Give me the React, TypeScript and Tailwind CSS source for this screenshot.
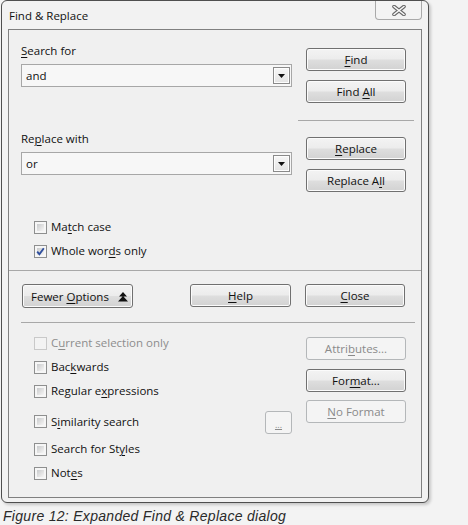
import React from "react";

const U = ({ c }: { c: string }) => (
  <span className="underline decoration-1 underline-offset-[2px]">{c}</span>
);

function Btn({
  children,
  w,
  disabled,
}: {
  children: React.ReactNode;
  w: string;
  disabled?: boolean;
}) {
  if (disabled) {
    return (
      <div
        className={
          "h-[23px] shrink-0 flex items-center justify-center rounded-[3px] border border-[#b4b7b9] bg-[#f4f4f4] text-[#8a8a8a] " +
          w
        }
      >
        <span className="whitespace-pre">{children}</span>
      </div>
    );
  }
  return (
    <div
      className={
        "h-[23px] shrink-0 flex items-center justify-center rounded-[3px] border border-[#707070] bg-[linear-gradient(to_bottom,#f3f3f3_0%,#ececec_48%,#dedede_52%,#d2d2d2_100%)] shadow-[inset_0_0_0_1px_#fbfbfb] text-[#111] " +
        w
      }
    >
      <span className="whitespace-pre">{children}</span>
    </div>
  );
}

function Check({ checked, disabled }: { checked?: boolean; disabled?: boolean }) {
  if (disabled) {
    return <div className="w-[13px] h-[13px] shrink-0 border border-[#c9c9c9] bg-[#f3f3f3]" />;
  }
  return (
    <div className="relative w-[13px] h-[13px] shrink-0 border border-[#8e8f8f] bg-[#f6f6f6] p-[2px]">
      <div className="w-full h-full bg-[linear-gradient(135deg,#c9cbcd_0%,#e4e4e4_60%,#f6f6f6_100%)]" />
      {checked && (
        <svg className="absolute left-[-1px] top-[-1px]" width="13" height="13" viewBox="0 0 13 13">
          <path d="M3.2 6.6 L5.4 9.3 L9.8 3.2" fill="none" stroke="#2f4f9e" strokeWidth="1.9" />
        </svg>
      )}
    </div>
  );
}

function Row({
  children,
  checked,
  disabled,
  className = "",
}: {
  children: React.ReactNode;
  checked?: boolean;
  disabled?: boolean;
  className?: string;
}) {
  return (
    <div className={"flex items-center h-[16px] pl-[13px] " + className}>
      <Check checked={checked} disabled={disabled} />
      <span className={"ml-[4px] whitespace-pre " + (disabled ? "text-[#8d8d8d]" : "text-[#111]")}>
        {children}
      </span>
    </div>
  );
}

function Combo({ value }: { value: string }) {
  return (
    <div className="mt-[5px] h-[23px] w-[271px] flex items-center border border-[#a7a7a7] bg-[#f7f7f7] pl-[4px] pr-[1px]">
      <span className="flex-1 text-[#111]">{value}</span>
      <div className="w-[17px] h-[17px] border border-[#8a8a8a] bg-[linear-gradient(to_bottom,#f7f7f7,#e3e3e3)] shadow-[inset_0_0_0_1px_#fdfdfd] flex items-center justify-center">
        <svg width="7" height="4" viewBox="0 0 7 4">
          <path d="M0 0 H7 L3.5 4 Z" fill="#111" />
        </svg>
      </div>
    </div>
  );
}

export default function App() {
  return (
    <div className="w-[468px] h-[525px] bg-[#f3f3f3] font-['Open_Sans',sans-serif] text-[11.5px] leading-[16px] text-[#111] overflow-hidden">
      <div className="ml-[1px] w-[428px] h-[503px] border border-[#4f4f4f] rounded-[6px] bg-[#f2f2f2] flex flex-col px-[6px] pb-[4px] shadow-[2px_2px_3px_rgba(0,0,0,0.18)]">
        {/* title bar */}
        <div className="h-[28px] flex justify-between items-start">
          <div className="mt-[7px] pl-[1px] text-[#111]">Find &amp; Replace</div>
          <div className="w-[47px] h-[19px] rounded-b-[4px] border border-t-0 border-[#a9a9a9] bg-[#f3f3f3] flex items-center justify-center">
            <svg width="14" height="11" viewBox="0 0 14 11">
              <path d="M2 1.5 L12 9.5 M12 1.5 L2 9.5" stroke="#666" strokeWidth="3.6" strokeLinecap="round" />
              <path d="M2 1.5 L12 9.5 M12 1.5 L2 9.5" stroke="#fafafa" strokeWidth="1.6" strokeLinecap="round" />
            </svg>
          </div>
        </div>

        {/* panel */}
        <div className="flex-1 border border-[#808080] bg-[#f0f0f0] flex flex-col">
          {/* top section */}
          <div className="flex pl-[12px] pr-[14px]">
            <div className="w-[271px] pt-[13px] flex flex-col">
              <div className="h-[16px]">
                <U c="S" />earch for
              </div>
              <Combo value="and" />
              <div className="h-[16px] mt-[44px]">
                Re<U c="p" />lace with
              </div>
              <Combo value="or" />
              <Row className="mt-[44px]">
                Ma<U c="t" />ch case
              </Row>
              <Row checked className="mt-[8px]">
                Whole wor<U c="d" />s only
              </Row>
            </div>
            <div className="ml-[14px] w-[100px] pt-[18px] flex flex-col">
              <Btn w="w-[100px]">
                <U c="F" />ind
              </Btn>
              <div className="mt-[9px]">
                <Btn w="w-[100px]">
                  Find <U c="A" />ll
                </Btn>
              </div>
              <div className="mt-[17px] -mx-[8px] h-px bg-[#a8a8a8]" />
              <div className="mt-[16px]">
                <Btn w="w-[100px]">
                  <U c="R" />eplace
                </Btn>
              </div>
              <div className="mt-[9px]">
                <Btn w="w-[100px]">
                  Replace A<U c="l" />l
                </Btn>
              </div>
            </div>
          </div>

          <div className="mt-[11px] h-px bg-[#a8a8a8]" />

          {/* middle buttons */}
          <div className="mt-[13px] flex pl-[13px]">
            <div className="h-[24px] w-[111px] shrink-0 flex items-center justify-between pl-[8px] pr-[4px] rounded-[3px] border border-[#707070] bg-[linear-gradient(to_bottom,#f3f3f3_0%,#ececec_48%,#dedede_52%,#d2d2d2_100%)] shadow-[inset_0_0_0_1px_#fbfbfb] text-[#111]">
              <span className="mt-[2px] whitespace-pre">
                Fewer <U c="O" />ptions
              </span>
              <svg width="10" height="10" viewBox="0 0 10 10" className="mt-[2px]">
                <path d="M5 0 L9 4.5 L1 4.5 Z M5 4 L10 9.5 L0 9.5 Z" fill="#111" />
              </svg>
            </div>
            <div className="ml-[57px]">
              <Btn w="w-[101px]">
                <U c="H" />elp
              </Btn>
            </div>
            <div className="ml-[14px]">
              <Btn w="w-[100px]">
                <U c="C" />lose
              </Btn>
            </div>
          </div>

          <div className="mt-[14px] ml-[12px] mr-[6px] h-px bg-[#a8a8a8]" />

          {/* bottom section */}
          <div className="flex pl-[12px] pr-[14px]">
            <div className="w-[271px] flex flex-col">
              <Row disabled className="mt-[12px]">
                C<U c="u" />rrent selection only
              </Row>
              <Row className="mt-[8px]">
                Bac<U c="k" />wards
              </Row>
              <Row className="mt-[8px]">
                Regular e<U c="x" />pressions
              </Row>
              <div className="mt-[12px] h-[23px] flex items-center justify-between">
                <Row className="-mt-[2px]">
                  S<U c="i" />milarity search
                </Row>
                <div className="w-[27px] h-[23px] rounded-[3px] border border-[#b4b7b9] bg-[#f4f4f4] flex items-end justify-center pb-[4px] text-[#8a8a8a] text-[9px] leading-[9px]">
                  <span className="underline decoration-1">...</span>
                </div>
              </div>
              <Row className="mt-[7px]">
                Search for St<U c="y" />les
              </Row>
              <Row className="mt-[8px]">
                Not<U c="e" />s
              </Row>
            </div>
            <div className="ml-[14px] w-[100px] flex flex-col">
              <div className="mt-[14px]">
                <Btn w="w-[100px]" disabled>
                  Attri<U c="b" />utes...
                </Btn>
              </div>
              <div className="mt-[9px]">
                <Btn w="w-[100px]">
                  For<U c="m" />at...
                </Btn>
              </div>
              <div className="mt-[8px]">
                <Btn w="w-[100px]" disabled>
                  <U c="N" />o Format
                </Btn>
              </div>
            </div>
          </div>
        </div>
      </div>
      <div className="mt-[5px] pl-[3px] font-['Liberation_Sans',Arial,sans-serif] italic text-[14px] leading-[16px] tracking-[0.3px] text-[#2a2a2a]">
        Figure 12: Expanded Find &amp; Replace dialog
      </div>
    </div>
  );
}
